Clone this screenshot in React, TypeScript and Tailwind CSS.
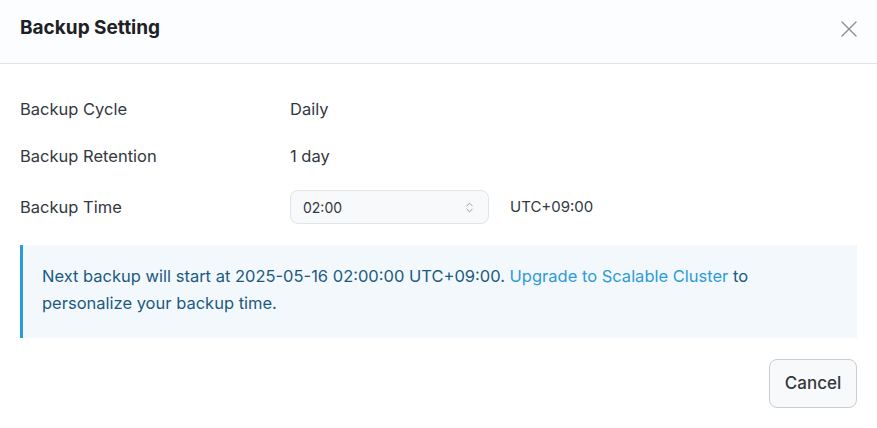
import { X, ChevronsUpDown } from "lucide-react";

const rows = [
  { label: "Backup Cycle", value: "Daily" },
  { label: "Backup Retention", value: "1 day" },
];

export default function App() {
  return (
    <div className="h-[428px] w-[877px] bg-white text-[#32383e]" style={{ fontFamily: "Inter, 'Noto Sans', sans-serif" }}>
      <div className="flex h-[64px] items-center justify-between border-b border-[#dfe4e8] bg-[#fcfdfe] pb-[6px] pl-5 pr-[14px]">
        <h1 className="text-[19px] font-bold text-[#1d2125]">Backup Setting</h1>
        <X className="h-[28px] w-[28px] text-[#8a8f94]" strokeWidth={1.2} />
      </div>

      <div className="px-5 pt-[22px]">
        {rows.map((r) => (
          <div key={r.label} className="flex h-[47px] items-center text-[16.5px]">
            <span className="w-[270px]">{r.label}</span>
            <span>{r.value}</span>
          </div>
        ))}
        <div className="mt-[10px] flex h-[34px] items-center text-[16.5px]">
          <span className="w-[270px]">Backup Time</span>
          <div className="flex h-[34px] w-[199px] items-center justify-between rounded-lg border border-[#e1e5e8] bg-[#f8f9fa] pl-3 pr-3 text-[14px]">
            <span>02:00</span>
            <ChevronsUpDown className="h-[13px] w-[13px] text-[#8a8f94]" strokeWidth={1.6} />
          </div>
          <span className="ml-[21px] text-[15px]">UTC+09:00</span>
        </div>

        <div className="mt-[21px] h-[93px] border-l-[3px] border-[#2d9bd6] bg-[#f3f8fc] pl-[19px] pr-5 pt-[18px] text-[16.5px] leading-[27px] text-[#1a5a82]">
          Next backup will start at 2025-05-16 02:00:00 UTC+09:00.{" "}
          <a className="text-[#2d9bd6]">Upgrade to Scalable Cluster</a> to personalize your backup time.
        </div>

        <div className="mt-[21px] flex justify-end">
          <button className="h-[49px] w-[88px] rounded-lg border border-[#c9ced3] bg-[#f8f9fa] text-[17px] font-medium text-[#32383e]">
            Cancel
          </button>
        </div>
      </div>
    </div>
  );
}
